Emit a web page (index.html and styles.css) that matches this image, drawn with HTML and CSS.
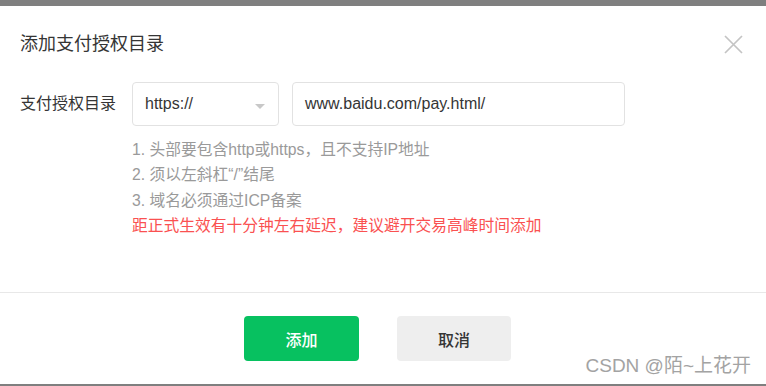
FILE: index.html
```html
<!DOCTYPE html>
<html lang="zh-CN">
<head>
<meta charset="utf-8">
<title>添加支付授权目录</title>
<link rel="stylesheet" href="styles.css">
</head>
<body>
<div class="dialog">
  <div class="header">
    <h2 class="title">添加支付授权目录</h2>
    <span class="close" aria-label="关闭">
      <svg width="19" height="19" viewBox="0 0 19 19"><path d="M1 1L18 18M18 1L1 18" stroke="#c4c4c4" stroke-width="1.7" fill="none"/></svg>
    </span>
  </div>
  <div class="main">
    <div class="row">
      <label class="label">支付授权目录</label>
      <div class="select">
        <span>https://</span>
        <span class="caret"></span>
      </div>
      <div class="input">www.baidu.com/pay.html/</div>
    </div>
    <ul class="hints">
      <li>1. 头部要包含http或https，且不支持IP地址</li>
      <li>2. 须以左斜杠“/”结尾</li>
      <li>3. 域名必须通过ICP备案</li>
      <li class="warn">距正式生效有十分钟左右延迟，建议避开交易高峰时间添加</li>
    </ul>
  </div>
  <div class="footer">
    <button class="btn primary">添加</button>
    <button class="btn default">取消</button>
  </div>
  <div class="watermark">CSDN @陌~上花开</div>
</div>
</body>
</html>
```

FILE: styles.css
```css
html, body {
  margin: 0;
  padding: 0;
}
body {
  background: #7f7f7f;
  width: 766px;
  height: 386px;
  overflow: hidden;
  font-family: "Liberation Sans", "Noto Sans CJK SC", sans-serif;
  font-size: 16px;
  color: #353535;
}
.dialog {
  position: relative;
  margin-top: 6px;
  height: 378px;
  background: #fff;
  display: flex;
  flex-direction: column;
}
.header {
  padding: 26px 20px 0;
}
.title {
  margin: 0;
  font-size: 18px;
  font-weight: normal;
  line-height: 24px;
  color: #353535;
}
.close {
  position: absolute;
  top: 29px;
  right: 23px;
  width: 19px;
  height: 19px;
}
.close svg {
  display: block;
}
.main {
  flex: 1;
  padding: 26px 20px 0;
}
.row {
  display: flex;
  align-items: center;
  gap: 13px;
}
.label {
  width: 99px;
  line-height: 44px;
}
.select {
  box-sizing: border-box;
  width: 147px;
  height: 44px;
  border: 1px solid #e2e2e2;
  border-radius: 4px;
  padding: 0 13px 0 12px;
  display: flex;
  align-items: center;
  justify-content: space-between;
}
.caret {
  width: 0;
  height: 0;
  border-left: 5.5px solid transparent;
  border-right: 5.5px solid transparent;
  border-top: 5px solid #c8c8c8;
  margin-top: 4px;
}
.input {
  box-sizing: border-box;
  width: 333px;
  height: 44px;
  border: 1px solid #e2e2e2;
  border-radius: 4px;
  padding: 0 12px;
  display: flex;
  align-items: center;
}
.hints {
  list-style: none;
  margin: 11px 0 0 112px;
  padding: 0;
  font-size: 15.75px;
  line-height: 25.4px;
  color: #9a9a9a;
}
.hints .warn {
  color: #fa5151;
}
.footer {
  border-top: 1px solid #e8e8e8;
  display: flex;
  justify-content: center;
  align-items: flex-start;
  gap: 38px;
  padding-top: 23px;
  padding-right: 11px;
  box-sizing: border-box;
  height: 92px;
}
.btn {
  height: 45px;
  border: none;
  border-radius: 4px;
  font-family: "Liberation Sans", "Noto Sans CJK SC", sans-serif;
  font-size: 16px;
  font-weight: 500;
  padding: 0;
}
.primary {
  width: 115px;
  background: #07c160;
  color: #fff;
}
.default {
  width: 114px;
  background: #eeeeee;
  color: #353535;
}
.watermark {
  position: absolute;
  right: 15px;
  bottom: 7px;
  font-size: 19px;
  color: #a3a3a3;
  text-shadow: 0 0 1px #fff;
  line-height: 22px;
}
```
